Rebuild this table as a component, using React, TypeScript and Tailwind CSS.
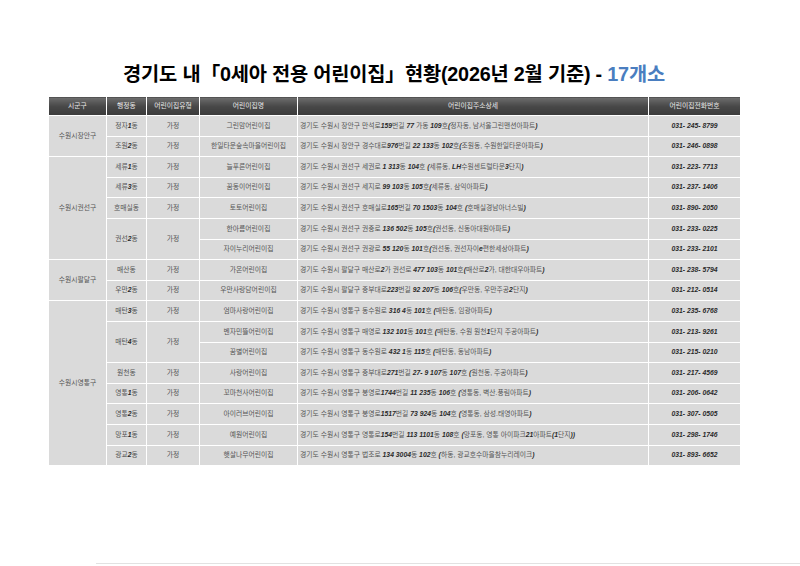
import React from "react";

type Row = {
  gu?: { name: string; span: number };
  dong?: { name: string; span: number };
  type?: { name: string; span: number };
  name: string;
  addr: string;
  tel: string;
};

const rows: Row[] = [
  {
    gu: { name: "수원시장안구", span: 2 },
    dong: { name: "정자1동", span: 1 },
    type: { name: "가정", span: 1 },
    name: "그린맘어린이집",
    addr: "경기도 수원시 장안구 만석로159번길 77 가동 109호(정자동, 남서울그린맨션아파트)",
    tel: "031- 245- 8799",
  },
  {
    dong: { name: "조원2동", span: 1 },
    type: { name: "가정", span: 1 },
    name: "한일타운숲속마을어린이집",
    addr: "경기도 수원시 장안구 경수대로976번길 22 133동 102호(조원동, 수원한일타운아파트)",
    tel: "031- 246- 0898",
  },
  {
    gu: { name: "수원시권선구", span: 5 },
    dong: { name: "세류1동", span: 1 },
    type: { name: "가정", span: 1 },
    name: "늘푸른어린이집",
    addr: "경기도 수원시 권선구 세권로 1 313동 104호 (세류동, LH수원센트럴타운3단지)",
    tel: "031- 223- 7713",
  },
  {
    dong: { name: "세류3동", span: 1 },
    type: { name: "가정", span: 1 },
    name: "꿈동이어린이집",
    addr: "경기도 수원시 권선구 세지로 99 103동 105호(세류동, 삼익아파트)",
    tel: "031- 237- 1406",
  },
  {
    dong: { name: "호매실동", span: 1 },
    type: { name: "가정", span: 1 },
    name: "토토어린이집",
    addr: "경기도 수원시 권선구 호매실로165번길 70 1503동 104호 (호매실경남아너스빌)",
    tel: "031- 890- 2050",
  },
  {
    dong: { name: "권선2동", span: 2 },
    type: { name: "가정", span: 2 },
    name: "한아름어린이집",
    addr: "경기도 수원시 권선구 권중로 136 502동 105호(권선동, 신동아대원아파트)",
    tel: "031- 233- 0225",
  },
  {
    name: "자이누리어린이집",
    addr: "경기도 수원시 권선구 권광로 55 120동 101호(권선동, 권선자이e편한세상아파트)",
    tel: "031- 233- 2101",
  },
  {
    gu: { name: "수원시팔달구", span: 2 },
    dong: { name: "매산동", span: 1 },
    type: { name: "가정", span: 1 },
    name: "가온어린이집",
    addr: "경기도 수원시 팔달구 매산로2가 권선로 477 103동 101호(매산로2가, 대한대우아파트)",
    tel: "031- 238- 5794",
  },
  {
    dong: { name: "우만2동", span: 1 },
    type: { name: "가정", span: 1 },
    name: "우만사랑담어린이집",
    addr: "경기도 수원시 팔달구 중부대로223번길 92 207동 106호(우만동, 우만주공2단지)",
    tel: "031- 212- 0514",
  },
  {
    gu: { name: "수원시영통구", span: 8 },
    dong: { name: "매탄3동", span: 1 },
    type: { name: "가정", span: 1 },
    name: "엄마사랑어린이집",
    addr: "경기도 수원시 영통구 동수원로 316 4동 101호 (매탄동, 임광아파트)",
    tel: "031- 235- 6768",
  },
  {
    dong: { name: "매탄4동", span: 2 },
    type: { name: "가정", span: 2 },
    name: "벤자민뜰어린이집",
    addr: "경기도 수원시 영통구 매영로 132 101동 101호 (매탄동, 수원 원천1단지 주공아파트)",
    tel: "031- 213- 9261",
  },
  {
    name: "꿈별어린이집",
    addr: "경기도 수원시 영통구 동수원로 432 1동 115호 (매탄동, 동남아파트)",
    tel: "031- 215- 0210",
  },
  {
    dong: { name: "원천동", span: 1 },
    type: { name: "가정", span: 1 },
    name: "사랑어린이집",
    addr: "경기도 수원시 영통구 중부대로271번길 27- 9 107동 107호 (원천동, 주공아파트)",
    tel: "031- 217- 4569",
  },
  {
    dong: { name: "영통1동", span: 1 },
    type: { name: "가정", span: 1 },
    name: "꼬마천사어린이집",
    addr: "경기도 수원시 영통구 봉영로1744번길 11 235동 106호 (영통동, 벽산.풍림아파트)",
    tel: "031- 206- 0642",
  },
  {
    dong: { name: "영통2동", span: 1 },
    type: { name: "가정", span: 1 },
    name: "아이러브어린이집",
    addr: "경기도 수원시 영통구 봉영로1517번길 73 924동 104호 (영통동, 삼성.태영아파트)",
    tel: "031- 307- 0505",
  },
  {
    dong: { name: "망포1동", span: 1 },
    type: { name: "가정", span: 1 },
    name: "예원어린이집",
    addr: "경기도 수원시 영통구 영통로154번길 113 1101동 108호 (망포동, 영통 아이파크21아파트(1단지))",
    tel: "031- 298- 1746",
  },
  {
    dong: { name: "광교2동", span: 1 },
    type: { name: "가정", span: 1 },
    name: "햇살나무어린이집",
    addr: "경기도 수원시 영통구 법조로 134 3004동 102호 (하동, 광교호수마을참누리레이크)",
    tel: "031- 893- 6652",
  },
];

// digits / latin / brackets are bold-italic in the source sheet
const fmt = (s: string) =>
  s.split(/([0-9A-Za-z()\-]+)/).map((p, i) =>
    /[0-9A-Za-z()\-]/.test(p) ? (
      <b key={i} className="font-bold italic text-[#2a2a2a]">
        {p}
      </b>
    ) : (
      <span key={i}>{p}</span>
    )
  );

const td = "bg-[#dadada] border-[1.5px] border-white h-[20.6px] p-0 align-middle";
const th =
  "bg-linear-to-b from-[#6e6e6e] via-[#484848] to-[#3a3a3a] border-[1.5px] border-white h-[19px] p-0 font-normal text-[#e8e8e8] text-center";

export default function App() {
  return (
    <div
      className="w-[800px] h-[566px] bg-white flex flex-col overflow-hidden"
      style={{ fontFamily: '"Liberation Sans", "Noto Sans CJK KR", sans-serif' }}
    >
      <div className="w-[692px] ml-[48px] pt-[62px]">
        <h1 className="text-center text-[19.8px] leading-[24px] font-bold text-black tracking-[-0.2px]">
          경기도 내「0세아 전용 어린이집」현황(2026년 2월 기준) -{" "}
          <span className="text-[#4a7ec0]">17개소</span>
        </h1>

        <table className="mt-[10px] w-[692px] border-collapse table-fixed text-[6.8px] text-[#555]">
          <colgroup>
            <col className="w-[58px]" />
            <col className="w-[40px]" />
            <col className="w-[53px]" />
            <col className="w-[98px]" />
            <col className="w-[351px]" />
            <col className="w-[92px]" />
          </colgroup>
          <thead>
            <tr>
              <th className={th}>시군구</th>
              <th className={th}>행정동</th>
              <th className={th}>어린이집유형</th>
              <th className={th}>어린이집명</th>
              <th className={th}>어린이집주소상세</th>
              <th className={th}>어린이집전화번호</th>
            </tr>
          </thead>
          <tbody>
            {rows.map((r, i) => (
              <tr key={i}>
                {r.gu && (
                  <td rowSpan={r.gu.span} className={`${td} text-center`}>
                    {r.gu.name}
                  </td>
                )}
                {r.dong && (
                  <td rowSpan={r.dong.span} className={`${td} text-center`}>
                    {fmt(r.dong.name)}
                  </td>
                )}
                {r.type && (
                  <td rowSpan={r.type.span} className={`${td} text-center`}>
                    {r.type.name}
                  </td>
                )}
                <td className={`${td} text-center`}>{r.name}</td>
                <td className={`${td} pl-[2px] text-left whitespace-nowrap`}>{fmt(r.addr)}</td>
                <td className={`${td} text-center font-bold italic text-[#2a2a2a]`}>{r.tel}</td>
              </tr>
            ))}
          </tbody>
        </table>
      </div>
      <div className="mt-auto mb-[2px] ml-[96px] h-px bg-[#e2e2e2]" />
    </div>
  );
}
